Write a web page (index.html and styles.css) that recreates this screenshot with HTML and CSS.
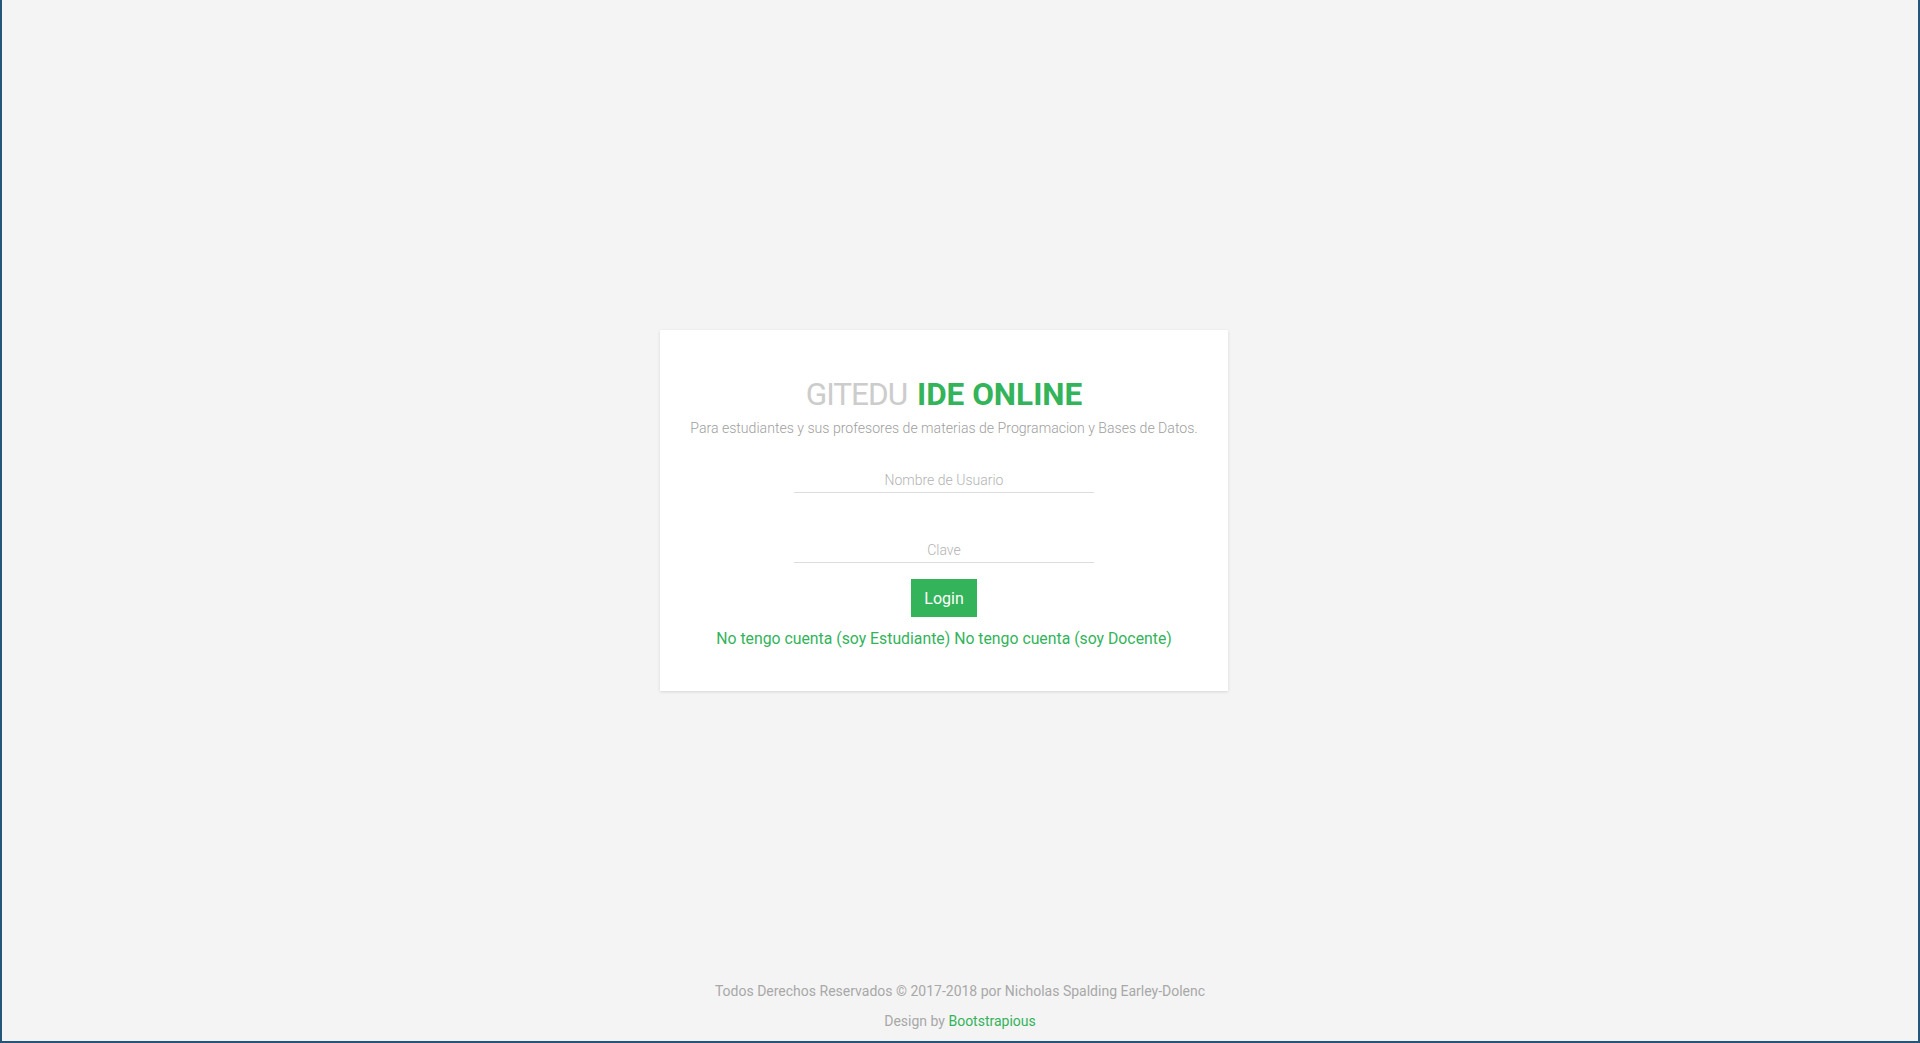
FILE: index.html
```html
<!DOCTYPE html>
<html lang="es">
<head>
<meta charset="utf-8">
<title>GITEDU IDE ONLINE</title>
<link rel="stylesheet" href="styles.css">
</head>
<body>
<div class="page">
  <main class="main">
    <div class="container">
      <div class="card">
        <h1 class="title"><span class="brand-light">GITEDU</span> <span class="brand-strong">IDE ONLINE</span></h1>
        <p class="subtitle">Para estudiantes y sus profesores de materias de Programacion y Bases de Datos.</p>
        <form class="form">
          <input class="input" type="text" placeholder="Nombre de Usuario">
          <input class="input input-pass" type="password" placeholder="Clave">
          <button class="btn" type="button">Login</button>
          <div class="links"><a class="link" href="#">No tengo cuenta (soy Estudiante)</a> <a class="link" href="#">No tengo cuenta (soy Docente)</a></div>
        </form>
      </div>
    </div>
  </main>
  <footer class="footer">
    <p class="copy">Todos Derechos Reservados © 2017-2018 por Nicholas Spalding Earley-Dolenc</p>
    <p class="design">Design by <a class="link" href="#">Bootstrapious</a></p>
  </footer>
</div>
</body>
</html>
```
FILE: styles.css
```css
* { box-sizing: border-box; }
html, body { margin: 0; padding: 0; }
body {
  font-family: Roboto, "Liberation Sans", sans-serif;
  background: #f4f4f4;
  color: #aaa;
}
.page {
  height: 1043px;
  border-left: 2px solid #26557a;
  border-right: 2px solid #26557a;
  border-bottom: 2px solid #26557a;
  display: flex;
  flex-direction: column;
}
.main {
  padding-top: 330px;
  flex: 1;
}
.container {
  width: 1140px;
  margin: 0 auto;
  padding-left: 270px;
}
.card {
  width: 568px;
  height: 361px;
  background: #fff;
  box-shadow: 0 1px 3px rgba(0,0,0,0.12);
  padding: 47px 10px 0;
  text-align: center;
}
.title {
  margin: 0;
  font-size: 31.5px;
  line-height: 36px;
  font-weight: 700;
}
.brand-light {
  color: #cccccc;
  font-weight: 400;
  letter-spacing: -1px;
  margin-right: 2px;
}
.brand-strong { color: #33b35a; }
.subtitle {
  margin: 5px 0 0;
  font-size: 14.1px;
  font-weight: 300;
  color: #a0a0a0;
  line-height: 20px;
}
.form {
  display: flex;
  flex-direction: column;
  align-items: center;
  margin-top: 28px;
}
.input {
  width: 300px;
  border: none;
  border-bottom: 1px solid #dddddd;
  background: transparent;
  font-family: Roboto, "Liberation Sans", sans-serif;
  font-size: 14px;
  font-weight: 300;
  line-height: 16px;
  text-align: center;
  padding: 6px 0 4px;
  height: 27px;
  outline: none;
  margin: 0;
}
.input::placeholder { color: #b3b3b3; }
.input-pass { margin-top: 43px; }
.btn {
  margin-top: 16px;
  height: 38px;
  border: none;
  background: #33b35a;
  color: #fff;
  font-family: Roboto, "Liberation Sans", sans-serif;
  font-size: 16px;
  padding: 0 13px;
}
.links {
  margin-top: 12px;
  font-size: 15.8px;
  line-height: 20px;
}
.link { color: #33b35a; text-decoration: none; }
.footer {
  text-align: center;
  padding-bottom: 5px;
}
.copy, .design {
  margin: 0;
  font-size: 14px;
  line-height: 30px;
  color: #a8a8a8;
}
```
